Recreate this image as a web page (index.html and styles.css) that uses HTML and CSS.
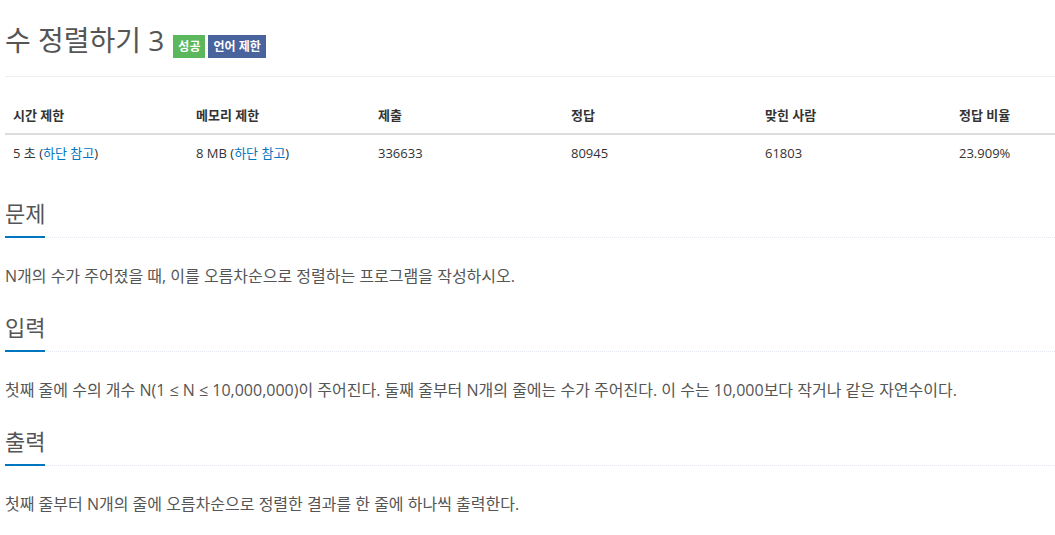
FILE: index.html
```html
<!DOCTYPE html>
<html lang="ko">
<head>
    <meta charset="UTF-8">
    <meta name="viewport" content="width=device-width, initial-scale=1.0">
    <title>수 정렬하기 3</title>
    <link rel="stylesheet" href="styles.css">
</head>
<body>
    <div class="page-header">
        <h1>
            <span class="problem-title">수 정렬하기 3</span>
            <span class="label label-success">성공</span>
            <span class="label label-primary">언어 제한</span>
        </h1>
    </div>

    <table class="problem-info">
        <colgroup>
            <col class="col-time">
            <col class="col-memory">
            <col class="col-submit">
            <col class="col-accepted">
            <col class="col-solved">
            <col class="col-ratio">
        </colgroup>
        <thead>
            <tr>
                <th>시간 제한</th>
                <th>메모리 제한</th>
                <th>제출</th>
                <th>정답</th>
                <th>맞힌 사람</th>
                <th>정답 비율</th>
            </tr>
        </thead>
        <tbody>
            <tr>
                <td>5 초 (<a href="#limit">하단 참고</a>)</td>
                <td>8 MB (<a href="#limit">하단 참고</a>)</td>
                <td>336633</td>
                <td>80945</td>
                <td>61803</td>
                <td>23.909%</td>
            </tr>
        </tbody>
    </table>

    <section class="problem-section">
        <div class="headline"><h2>문제</h2></div>
        <p>N개의 수가 주어졌을 때, 이를 오름차순으로 정렬하는 프로그램을 작성하시오.</p>
    </section>

    <section class="problem-section">
        <div class="headline"><h2>입력</h2></div>
        <p>첫째 줄에 수의 개수 N(1 ≤ N ≤ 10,000,000)이 주어진다. 둘째 줄부터 N개의 줄에는 수가 주어진다. 이 수는 10,000보다 작거나 같은 자연수이다.</p>
    </section>

    <section class="problem-section">
        <div class="headline"><h2>출력</h2></div>
        <p>첫째 줄부터 N개의 줄에 오름차순으로 정렬한 결과를 한 줄에 하나씩 출력한다.</p>
    </section>
</body>
</html>
```

FILE: styles.css
```css
body {
    font-family: "Open Sans", "Noto Sans CJK KR", sans-serif;
    margin: 0;
    padding: 0 0 0 5px;
    color: #555;
    background: #fff;
}
a {
    color: #0076c0;
    text-decoration: none;
}
.page-header {
    margin: 0 0 20px;
    padding: 20px 0 16px;
    border-bottom: 1px solid #eee;
}
.page-header h1 {
    display: flex;
    align-items: flex-end;
    gap: 3px;
    margin: 0;
    font-size: 28px;
    font-weight: 400;
    line-height: 40px;
}
.problem-title {
    color: #555;
    margin-right: 6px;
}
.label {
    margin-bottom: 2px;
    padding: 0 5px;
    font-size: 12px;
    font-weight: 700;
    line-height: 23px;
    color: #fff;
}
.label-success {
    background: #5cb85c;
}
.label-primary {
    background: #49639c;
}
.problem-info {
    width: 100%;
    border-collapse: collapse;
    font-size: 13px;
    color: #333;
    margin-bottom: 27px;
}
.col-time { width: 183px; }
.col-memory { width: 182px; }
.col-submit { width: 193px; }
.col-accepted { width: 194px; }
.col-solved { width: 194px; }
.col-ratio { width: 104px; }
.problem-info th {
    text-align: left;
    font-weight: 700;
    padding: 8px;
    line-height: 20px;
    border-bottom: 2px solid #ddd;
}
.problem-info td {
    padding: 8px;
    line-height: 20px;
}
.headline {
    border-bottom: 1px dotted #e4e9f0;
    margin: 0 0 23px;
}
.headline h2 {
    display: inline-block;
    margin: 0 0 -1px;
    padding-bottom: 8px;
    font-size: 22px;
    font-weight: 400;
    line-height: 30px;
    color: #555;
    border-bottom: 2px solid #0076c0;
}
.problem-section p {
    margin: 0 0 21px;
    font-size: 16px;
    line-height: 30px;
}
```
